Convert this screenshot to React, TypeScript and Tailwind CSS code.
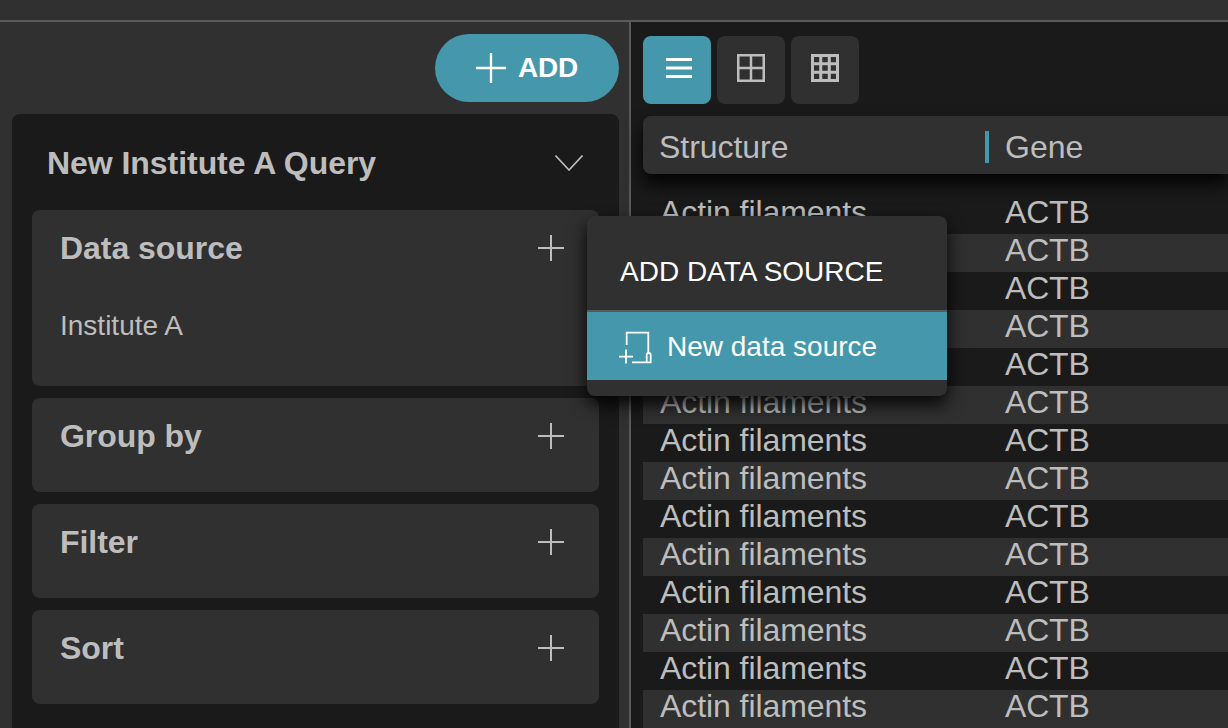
import React from 'react';

const PlusIcon = ({ size = 26, className = '' }: { size?: number; className?: string }) => (
  <svg width={size} height={size} viewBox="0 0 26 26" className={className} fill="none" stroke="currentColor" strokeWidth="2">
    <path d="M13 0V26M0 13H26" />
  </svg>
);

const ListIcon = () => (
  <svg width="26" height="20" viewBox="0 0 26 20" fill="none" stroke="#ffffff" strokeWidth="3">
    <path d="M0 1.5H26M0 10H26M0 18.5H26" />
  </svg>
);

const Grid2Icon = () => (
  <svg width="28" height="28" viewBox="0 0 28 28" fill="none" stroke="#bdbdbd" strokeWidth="2.5">
    <path d="M1.25 1.25H26.75V26.75H1.25ZM14 1V27M1 14H27" />
  </svg>
);

const Grid3Icon = () => (
  <svg width="28" height="28" viewBox="0 0 28 28" fill="none" stroke="#bdbdbd" strokeWidth="3">
    <path d="M1.5 1.5H26.5V26.5H1.5ZM9.75 1V27M18.25 1V27M1 9.75H27M1 18.25H27" />
  </svg>
);

const NewSourceIcon = () => (
  <svg width="34" height="35" viewBox="0 0 34 35" fill="none" stroke="#ffffff" strokeWidth="1.8">
    <path d="M7.7 16V3.7H29.3V24" />
    <path d="M13 33.3H31.7V26A2 2 0 0 0 27.7 26V33.3" />
    <path d="M0 27.7H14M7 20.5V34.5" />
  </svg>
);

const Section = ({ title, children, className }: { title: string; children?: React.ReactNode; className: string }) => (
  <div className={`rounded-lg bg-[#303030] pl-[28px] pr-[35px] ${className}`}>
    <div className="flex h-[76px] items-center justify-between">
      <span className="text-[32px] font-bold tracking-[-0.05px] text-[#bdbdbd]">{title}</span>
      <PlusIcon className="text-[#bdbdbd]" />
    </div>
    {children}
  </div>
);

const rows = Array.from({ length: 14 }, (_, i) => i);

export default function App() {
  return (
    <div className="flex h-[728px] w-[1228px] flex-col overflow-hidden bg-[#303030] font-['Liberation_Sans',Arial,sans-serif]">
      <div className="h-[22px] shrink-0 border-b-2 border-[#5a5a5a] bg-[#303030]" />
      <div className="relative flex min-h-0 flex-1">
        <div className="flex w-[629px] shrink-0 flex-col pl-3 pr-[10px] pt-3">
          <div className="flex justify-end">
            <button className="flex h-[68px] w-[184px] items-center justify-center gap-3 rounded-full bg-[#4597ac] text-[28px] font-bold tracking-[-0.2px] text-white">
              <PlusIcon size={30} />
              ADD
            </button>
          </div>
          <div className="mt-3 flex-1 rounded-t-lg bg-[#1a1a1a] px-5">
            <div className="flex h-[96px] items-center justify-between pl-[15px] pr-4 pt-[2px]">
              <span className="text-[32px] font-bold tracking-[-0.05px] text-[#bdbdbd]">New Institute A Query</span>
              <svg width="28" height="16" viewBox="0 0 28 16" fill="none" stroke="#bdbdbd" strokeWidth="1.6">
                <path d="M0.5 0.5L14 15L27.5 0.5" />
              </svg>
            </div>
            <div className="flex flex-col gap-3">
              <Section title="Data source" className="h-[176px]">
                <p className="mt-[21px] text-[28px] leading-[38px] text-[#bdbdbd]">Institute A</p>
              </Section>
              <Section title="Group by" className="h-[94px]" />
              <Section title="Filter" className="h-[94px]" />
              <Section title="Sort" className="h-[94px]" />
            </div>
          </div>
        </div>

        <div className="min-w-0 flex-1 border-l-2 border-[#5a5a5a] bg-[#1a1a1a] pl-3 pt-[14px]">
          <div className="flex gap-[6px]">
            <div className="flex h-[68px] w-[68px] items-center justify-center rounded-lg bg-[#4597ac] pb-1 pl-1">
              <ListIcon />
            </div>
            <div className="flex h-[68px] w-[68px] items-center justify-center rounded-lg bg-[#303030] pb-1">
              <Grid2Icon />
            </div>
            <div className="flex h-[68px] w-[68px] items-center justify-center rounded-lg bg-[#303030] pb-1">
              <Grid3Icon />
            </div>
          </div>
          <div className="relative z-10 mt-3 flex h-[58px] items-center rounded-l-lg bg-[#303030] text-[32px] text-[#bdbdbd] shadow-[0_10px_18px_rgba(0,0,0,0.9)]">
            <span className="mt-1 w-[342px] pl-4 tracking-[-0.05px]">Structure</span>
            <span className="mt-1 h-8 w-1 bg-[#4597ac]" />
            <span className="mt-1 pl-4">Gene</span>
          </div>
          <div className="mt-[22px] text-[32px] text-[#bdbdbd]">
            {rows.map((i) => (
              <div key={i} className={`flex h-[38px] items-start leading-[32px] ${i % 2 === 1 ? 'bg-[#303030]' : ''}`}>
                <span className="w-[362px] pl-[17px] tracking-[-0.07px]">Actin filaments</span>
                <span className="tracking-[-0.2px]">ACTB</span>
              </div>
            ))}
          </div>
        </div>

        <div className="absolute left-[587px] top-[194px] z-20 h-[180px] w-[360px] rounded-lg bg-[#303030] shadow-[0_8px_18px_rgba(0,0,0,0.9)]">
          <div className="flex h-[96px] items-center border-b-2 border-[#5a5a5a] pl-[33px] pt-[18px] text-[28px] text-white">
            ADD DATA SOURCE
          </div>
          <div className="flex h-[68px] items-center gap-[14px] bg-[#4597ac] pl-[32px] text-[28px] text-white">
            <NewSourceIcon />
            <span className="mt-px">New data source</span>
          </div>
        </div>
      </div>
    </div>
  );
}
